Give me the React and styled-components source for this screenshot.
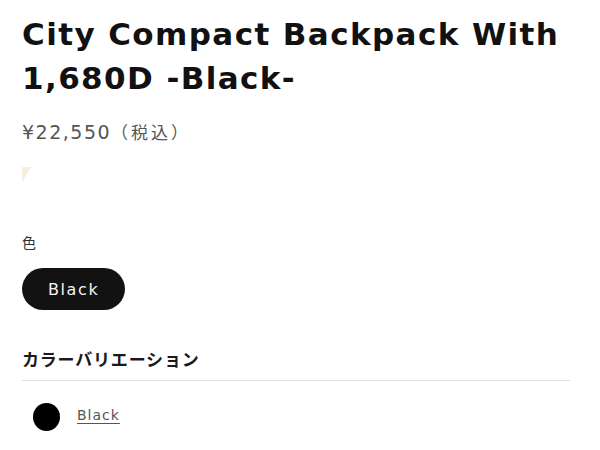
import React from 'react';
import styled, { createGlobalStyle } from 'styled-components';

const GlobalStyle = createGlobalStyle`
  body {
    margin: 0;
    background: #fff;
    font-family: 'DejaVu Sans', 'Noto Sans CJK JP', sans-serif;
    color: #121212;
  }
`;

const Page = styled.div`
  width: 548px;
  padding: 12px 0 0 22px;
`;

const Title = styled.h1`
  margin: 0;
  font-size: 31px;
  line-height: 44px;
  font-weight: 700;
  letter-spacing: 1.4px;
  color: #111;
`;

const Price = styled.div`
  margin-top: 20px;
  font-size: 19px;
  line-height: 24px;
  color: #555;
  letter-spacing: 1.5px;
`;

const Tax = styled.span`
  font-size: 17px;
  letter-spacing: 3px;
`;

const Placeholder = styled.div`
  margin-top: 22px;
  width: 0;
  height: 0;
  border-top: 16px solid #f7efde;
  border-right: 9px solid transparent;
`;

const OptionLabel = styled.div`
  margin-top: 50px;
  font-size: 14px;
  line-height: 20px;
  color: #333;
`;

const Pill = styled.button`
  margin-top: 15px;
  height: 42px;
  padding: 0 26px;
  border: none;
  border-radius: 21px;
  background: #121212;
  color: #f3f3f3;
  font-family: inherit;
  font-size: 16px;
  letter-spacing: 1.6px;
`;

const SectionTitle = styled.h2`
  margin: 38px 0 0;
  padding-bottom: 8px;
  font-size: 17px;
  line-height: 24px;
  font-weight: 700;
  letter-spacing: 0.8px;
  color: #1a1a1a;
  border-bottom: 1px solid #dedede;
`;

const VariantRow = styled.div`
  display: flex;
  align-items: center;
  gap: 17px;
  padding: 22px 0 0 11px;
`;

const Swatch = styled.span`
  width: 27px;
  height: 28px;
  border-radius: 50%;
  background: ${(p) => p.color};
`;

const VariantLink = styled.a`
  margin-top: -5px;
  font-size: 14px;
  color: #555;
  letter-spacing: 1px;
  text-decoration: underline;
  text-underline-offset: 3px;
`;

export default function App() {
  return (
    <>
      <GlobalStyle />
      <Page>
        <Title>City Compact Backpack With 1,680D -Black-</Title>
        <Price>
          ¥22,550<Tax>（税込）</Tax>
        </Price>
        <Placeholder />
        <OptionLabel>色</OptionLabel>
        <Pill>Black</Pill>
        <SectionTitle>カラーバリエーション</SectionTitle>
        <VariantRow>
          <Swatch color="#000" />
          <VariantLink href="#">Black</VariantLink>
        </VariantRow>
      </Page>
    </>
  );
}
